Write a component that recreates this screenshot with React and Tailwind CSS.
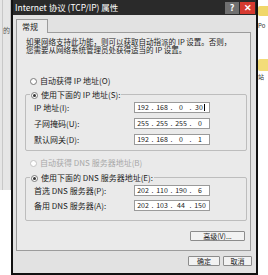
const font = { fontFamily: '"Noto Sans CJK SC", "Liberation Sans", sans-serif' };

function Radio({ checked, disabled }) {
  return (
    <span
      className={`w-[7px] h-[7px] rounded-full border flex items-center justify-center bg-white ${
        disabled ? "border-[#c4c4c4]" : "border-[#7a7a7a]"
      }`}
    >
      {checked && <span className="w-[3px] h-[3px] rounded-full bg-[#333]" />}
    </span>
  );
}

function IpBox({ parts, cursor }) {
  return (
    <div className="w-[76px] h-[11px] bg-white border border-[#9a9a9a] flex items-center text-[7px] leading-none text-[#222]">
      {parts.map((p, i) => (
        <div key={i} className="flex items-center">
          <span className="w-[16px] text-center">
            {p}
            {cursor && i === 3 && <span className="inline-block w-px h-[7px] bg-black align-middle ml-px" />}
          </span>
          {i < 3 && <span className="w-[3px] text-center">.</span>}
        </div>
      ))}
    </div>
  );
}

function Row({ label, parts, cursor }) {
  return (
    <div className="flex items-center h-[11px]">
      <span className="w-[108px] pl-[8px] text-[8px] leading-none">{label}</span>
      <IpBox parts={parts} cursor={cursor} />
    </div>
  );
}

function Btn({ children, w }) {
  return (
    <div
      className={`${w} h-[10px] flex items-center justify-center text-[7px] leading-none text-[#222] bg-[#f2f2f2] border border-[#8c8c8c] rounded-[1px]`}
    >
      {children}
    </div>
  );
}

export default function App() {
  return (
    <div className="w-[268px] h-[275px] flex bg-white overflow-hidden text-[#222]" style={font}>
      {/* left: edge of another window */}
      <div className="w-[11px] flex flex-col">
        <div className="h-[190px] bg-[#e6e6e6] border-r border-[#bdbdbd] flex">
          <div className="w-[4px] border-r border-[#c8c8c8]" />
          <span className="text-[7px] leading-none mt-[27px] text-[#555]">的</span>
        </div>
        <div className="flex-1 bg-white" />
      </div>

      {/* dialog */}
      <div className="w-[247px] h-[275px] flex flex-col bg-[#e2e2e2] border-l-2 border-r-2 border-b-2 border-[#111]">
        <div className="h-[15px] bg-[#2a2a2a] flex items-center pl-[2px] pr-[1px] shrink-0">
          <span className="text-[8.5px] leading-none text-white flex-1">Internet 协议 (TCP/IP) 属性</span>
          <div className="w-[14px] h-[12px] bg-[#707070] text-white text-[9px] font-bold leading-none flex items-center justify-center">?</div>
          <div className="w-[15px] h-[12px] bg-[#d63a30] text-white text-[9px] font-bold leading-none flex items-center justify-center ml-px">✕</div>
        </div>

        <div className="pl-[3px] pt-[4px] flex flex-col">
          <div className="w-[32px] h-[14px] border border-b-0 border-[#9c9c9c] bg-[#eaeaea] flex items-center pl-[5px] text-[8px] leading-none relative z-10">
            常规
          </div>
          <div className="w-[235px] h-[219px] -mt-px border border-[#9c9c9c] bg-[#eaeaea] flex flex-col">
            <div className="pl-[9px] pt-[5px] text-[7.5px] leading-[8px] whitespace-nowrap">
              <div className="h-[8px]">如果网络支持此功能，则可以获取自动指派的 IP 设置。否则，</div>
              <div className="h-[8px]">您需要从网络系统管理员处获得适当的 IP 设置。</div>
            </div>

            <div className="flex items-center gap-[3px] pl-[13px] mt-[22px] h-[10px] text-[8px] leading-none">
              <Radio />
              <span>自动获得 IP 地址(O)</span>
            </div>

            <div className="ml-[8px] mt-[8px] w-[222px] h-[57px] border border-[#bdbdbd] rounded-[2px] flex flex-col">
              <div className="-mt-[5px] ml-[4px] h-[10px] px-px bg-[#eaeaea] self-start flex items-center gap-[3px] text-[8px] leading-none">
                <Radio checked />
                <span>使用下面的 IP 地址(S):</span>
              </div>
              <div className="flex flex-col gap-[5px] mt-[2px]">
                <Row label="IP 地址(I):" parts={["192", "168", "0", "30"]} cursor />
                <Row label="子网掩码(U):" parts={["255", "255", "255", "0"]} />
                <Row label="默认网关(D):" parts={["192", "168", "0", "1"]} />
              </div>
            </div>

            <div className="flex items-center gap-[3px] pl-[13px] mt-[7px] h-[10px] text-[8px] leading-none text-[#a8a8a8]">
              <Radio disabled />
              <span>自动获得 DNS 服务器地址(B)</span>
            </div>

            <div className="ml-[8px] mt-[9px] w-[222px] h-[44px] border border-[#bdbdbd] rounded-[2px] flex flex-col">
              <div className="-mt-[5px] ml-[4px] h-[10px] px-px bg-[#eaeaea] self-start flex items-center gap-[3px] text-[8px] leading-none">
                <Radio checked />
                <span>使用下面的 DNS 服务器地址(E):</span>
              </div>
              <div className="flex flex-col gap-[4px] mt-[2px]">
                <Row label="首选 DNS 服务器(P):" parts={["202", "110", "190", "6"]} />
                <Row label="备用 DNS 服务器(A):" parts={["202", "103", "44", "150"]} />
              </div>
            </div>

            <div className="flex justify-end pr-[5px] mt-[10px]">
              <Btn w="w-[55px]">高级(V)...</Btn>
            </div>
          </div>

          <div className="flex justify-end gap-[3px] pr-[4px] mt-[5px]">
            <Btn w="w-[32px]">确定</Btn>
            <Btn w="w-[29px]">取消</Btn>
          </div>
        </div>
      </div>

      {/* right: desktop edge */}
      <div className="w-[10px] flex flex-col bg-white">
        <div className="h-[10px] mt-[6px] bg-[#f0d76a] rounded-l-[2px]" />
        <span className="text-[6px] leading-none mt-[7px] text-[#333]">Po</span>
        <div className="h-[12px] mt-[30px] bg-[#f3dc78] rounded-l-[2px]" />
        <span className="text-[6px] leading-none mt-[3px] text-[#333]">站</span>
      </div>
    </div>
  );
}
